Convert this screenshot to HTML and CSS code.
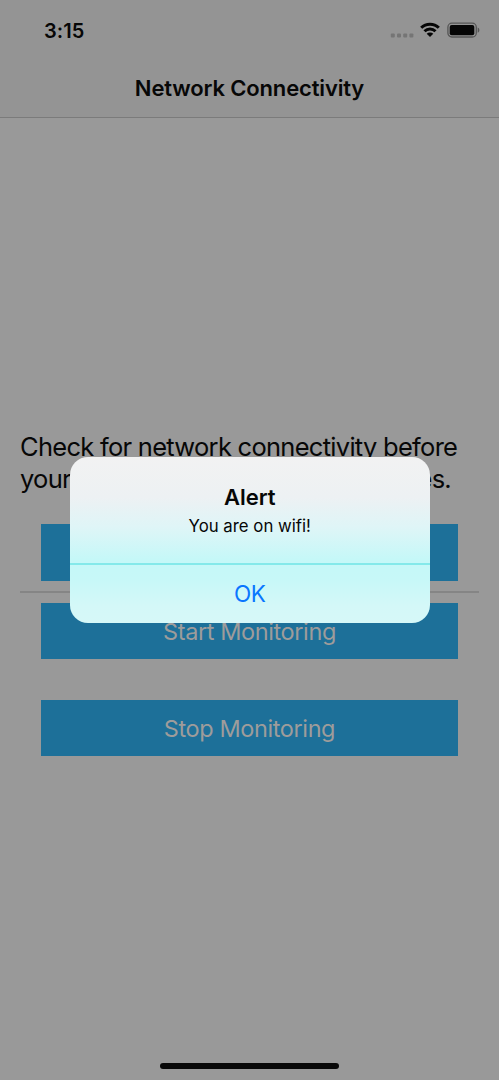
FILE: index.html
```html
<!DOCTYPE html>
<html lang="en">
<head>
<meta charset="utf-8">
<title>Network Connectivity</title>
<link rel="stylesheet" href="styles.css">
</head>
<body>
<div class="screen">
  <header class="header">
    <div class="status">
      <span class="time">3:15</span>
      <div class="indicators">
        <svg class="signal" width="24" height="5" viewBox="0 0 24 5"><g fill="#757575"><rect x="0.8" y="0.5" width="4" height="4" rx="1"/><rect x="7" y="0.5" width="4" height="4" rx="1"/><rect x="13.2" y="0.5" width="4" height="4" rx="1"/><rect x="19.4" y="0.5" width="4" height="4" rx="1"/></g></svg>
        <svg class="wifi" width="20" height="15" viewBox="0 0 20 15"><g fill="none" stroke="#060606" stroke-width="3"><path d="M1.2 5.8a12.5 12.5 0 0 1 17.6 0"/><path d="M4.5 9.3a7.8 7.8 0 0 1 11 0"/></g><path d="M6.7 11.8a4.7 4.7 0 0 1 6.6 0L10 15z" fill="#060606"/></svg>
        <svg class="battery" width="33" height="16" viewBox="0 0 33 16"><rect x="0.9" y="1.2" width="28.4" height="13.8" rx="4" fill="none" stroke="#555" stroke-width="1.3"/><rect x="2.7" y="3" width="24.6" height="10.2" rx="2" fill="#050505"/><path d="M30.7 5.5c2.2.8 2.2 4.5 0 5.3z" fill="#555"/></svg>
      </div>
    </div>
    <h1 class="title">Network Connectivity</h1>
  </header>
  <main class="content">
    <div class="intro">
      <div>Check for network connectivity before</div>
      <div class="intro-line"><span>your</span><span>es.</span></div>
    </div>
    <div class="button first"></div>
    <div class="divider"></div>
    <div class="button start">Start Monitoring</div>
    <div class="button stop">Stop Monitoring</div>
  </main>
  <div class="home-bar"></div>
  <div class="alert">
    <div class="alert-body">
      <div class="alert-title">Alert</div>
      <div class="alert-message">You are on wifi!</div>
    </div>
    <div class="alert-action">OK</div>
  </div>
</div>
</body>
</html>
```
FILE: styles.css
```css
* { box-sizing: border-box; }
body { margin: 0; font-family: Inter, "Liberation Sans", sans-serif; color: #070707; }
.screen { position: relative; width: 499px; height: 1080px; background: #999; display: flex; flex-direction: column; overflow: hidden; }
.header { height: 118px; flex: none; background: #949494; border-bottom: 1px solid #7b7b7b; }
.status { height: 60px; display: flex; justify-content: space-between; padding: 0 19px 0 44px; }
.time { font-size: 20px; font-weight: 590; line-height: 24px; margin-top: 19px; letter-spacing: 0.1px; }
.indicators { display: flex; align-items: flex-start; }
.signal { margin: 33px 6px 0 0; }
.wifi { margin: 22px 7px 0 0; }
.battery { margin-top: 22px; }
.title { margin: 14px 0 0; font-size: 22px; line-height: 28px; font-weight: 570; text-align: center; letter-spacing: -0.15px; }
.content { flex: 1; padding: 313px 20px 0; }
.intro { font-size: 25.5px; line-height: 32px; height: 64px; letter-spacing: -0.72px; white-space: nowrap; }
.intro-line { display: flex; justify-content: space-between; padding-right: 28px; }
.button { height: 56px; margin: 0 21px; background: #1d7099; color: #9e9c9b; font-size: 23.5px; line-height: 58px; text-align: center; letter-spacing: -0.4px; }
.first { height: 57px; margin-top: 29px; }
.divider { height: 2px; margin-top: 10px; background: #858585; }
.start { margin-top: 10px; }
.stop { margin-top: 41px; }
.home-bar { width: 179px; height: 6px; flex: none; margin: 0 auto 11px; border-radius: 3px; background: #090909; }
.alert { position: absolute; left: 70px; top: 457.4px; width: 359.5px; height: 165.4px; border-radius: 18px; overflow: hidden; text-align: center; background: linear-gradient(#f2f2f2 0%, #edf1f3 24%, #dff5f7 42%, #c5f8f8 62%, #c7f8f8 74%, #d4f8f8 90%, #d6f8f8 100%); }
.alert-body { height: 108px; padding-top: 26px; border-bottom: 2px solid #84e9ea; }
.alert-title { font-size: 22px; line-height: 28px; font-weight: 600; }
.alert-message { font-size: 16.8px; line-height: 22px; margin-top: 4px; }
.alert-action { color: #0a76ff; font-size: 22.5px; line-height: 58px; letter-spacing: -0.5px; }
```
